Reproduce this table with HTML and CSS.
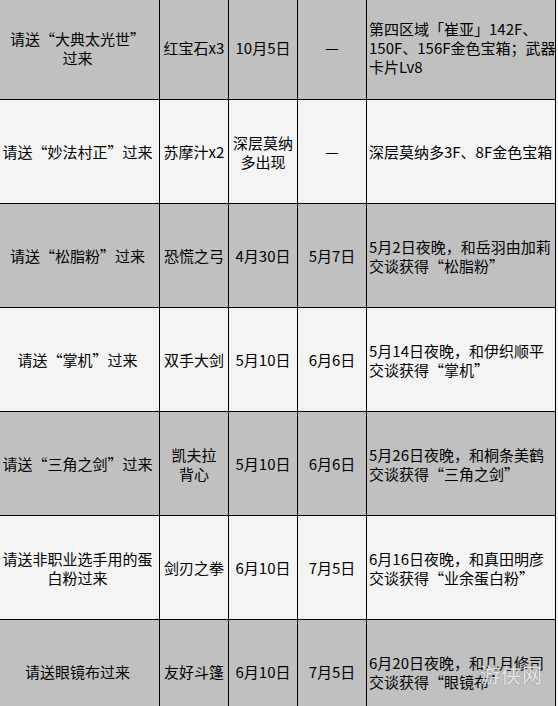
FILE: index.html
```html
<!DOCTYPE html>
<html lang="zh-CN">
<head>
<meta charset="utf-8">
<title>任务表</title>
<link rel="stylesheet" href="styles.css">
</head>
<body>
<div class="sheet">
  <div class="cell gray"><p>请送<span class="qo">“</span>大典太光世<span class="qc">”</span><br>过来</p></div>
  <div class="cell gray"><p>红宝石x3</p></div>
  <div class="cell gray"><p>10月5日</p></div>
  <div class="cell gray"><p>—</p></div>
  <div class="cell gray note"><p>第四区域「崔亚」142F、<br>150F、156F金色宝箱；武器<br>卡片Lv8</p></div>

  <div class="cell light"><p>请送<span class="qo">“</span>妙法村正<span class="qc">”</span>过来</p></div>
  <div class="cell light"><p>苏摩汁x2</p></div>
  <div class="cell light"><p>深层莫纳<br>多出现</p></div>
  <div class="cell light"><p>—</p></div>
  <div class="cell light note"><p>深层莫纳多3F、8F金色宝箱</p></div>

  <div class="cell gray"><p>请送<span class="qo">“</span>松脂粉<span class="qc">”</span>过来</p></div>
  <div class="cell gray"><p>恐慌之弓</p></div>
  <div class="cell gray"><p>4月30日</p></div>
  <div class="cell gray"><p>5月7日</p></div>
  <div class="cell gray note"><p>5月2日夜晚，和岳羽由加莉<br>交谈获得<span class="qo">“</span>松脂粉<span class="qc">”</span></p></div>

  <div class="cell light"><p>请送<span class="qo">“</span>掌机<span class="qc">”</span>过来</p></div>
  <div class="cell light"><p>双手大剑</p></div>
  <div class="cell light"><p>5月10日</p></div>
  <div class="cell light"><p>6月6日</p></div>
  <div class="cell light note"><p>5月14日夜晚，和伊织顺平<br>交谈获得<span class="qo">“</span>掌机<span class="qc">”</span></p></div>

  <div class="cell gray"><p>请送<span class="qo">“</span>三角之剑<span class="qc">”</span>过来</p></div>
  <div class="cell gray"><p>凯夫拉<br>背心</p></div>
  <div class="cell gray"><p>5月10日</p></div>
  <div class="cell gray"><p>6月6日</p></div>
  <div class="cell gray note"><p>5月26日夜晚，和桐条美鹤<br>交谈获得<span class="qo">“</span>三角之剑<span class="qc">”</span></p></div>

  <div class="cell light"><p>请送非职业选手用的蛋<br>白粉过来</p></div>
  <div class="cell light"><p>剑刃之拳</p></div>
  <div class="cell light"><p>6月10日</p></div>
  <div class="cell light"><p>7月5日</p></div>
  <div class="cell light note"><p>6月16日夜晚，和真田明彦<br>交谈获得<span class="qo">“</span>业余蛋白粉<span class="qc">”</span></p></div>

  <div class="cell gray"><p>请送眼镜布过来</p></div>
  <div class="cell gray"><p>友好斗篷</p></div>
  <div class="cell gray"><p>6月10日</p></div>
  <div class="cell gray"><p>7月5日</p></div>
  <div class="cell gray note"><p>6月20日夜晚，和几月修司<br>交谈获得<span class="qo">“</span>眼镜布<span class="qc">”</span></p></div>
</div>
<span class="watermark">游侠网</span>
</body>
</html>
```

FILE: styles.css
```css
html, body {
  margin: 0;
  padding: 0;
}
body {
  background: #f4f4f4;
  font-family: "Noto Sans CJK SC", "Noto Sans", sans-serif;
  font-size: 15px;
  line-height: 19px;
  color: #000;
  overflow: hidden;
  width: 558px;
  height: 706px;
  position: relative;
}
.sheet {
  display: grid;
  grid-template-columns: 163px 68px 68px 68px 188px;
  grid-auto-rows: 103px;
  gap: 1px;
  padding: 1px;
  background: #000;
  margin-left: -5px;
  margin-top: -5px;
  width: max-content;
}
.cell {
  display: flex;
  align-items: center;
  justify-content: center;
  text-align: center;
  white-space: nowrap;
}
.cell p {
  margin: 0;
}
.qo,
.qc {
  display: inline-block;
  width: 1em;
}
.qo {
  text-align: right;
}
.qc {
  text-align: left;
}
.gray {
  background: #c0c0c0;
}
.light {
  background: #f4f4f4;
}
.note {
  justify-content: flex-start;
  text-align: left;
  padding-left: 2px;
}
.watermark {
  position: absolute;
  left: 480px;
  top: 662px;
  font-size: 20px;
  line-height: 26px;
  color: rgba(255, 255, 255, 0.85);
  text-shadow: 0 0 1px rgba(0, 0, 0, 0.45);
  letter-spacing: 1px;
}
```
